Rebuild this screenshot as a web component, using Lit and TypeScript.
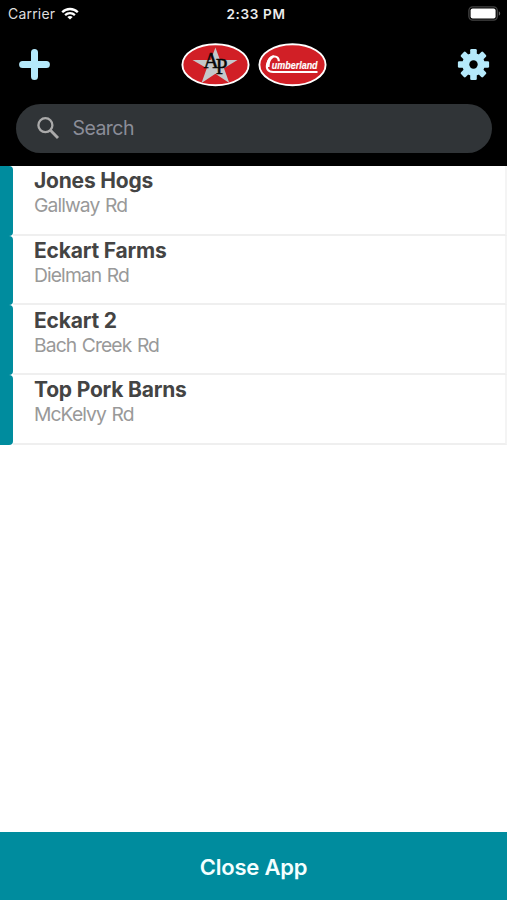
import { LitElement, html, svg, css } from "lit";
import { customElement, property } from "lit/decorators.js";

@customElement("status-bar")
class StatusBar extends LitElement {
  static styles = css`
    :host { display: grid; grid-template-columns: 1fr auto 1fr; align-items: center; height: 28px; color: #ececec; font-size: 14px; padding: 0 6px 0 8px; }
    .carrier { display: flex; align-items: center; gap: 6px; color: #dedede; letter-spacing: 0.2px; margin-top: -1px; }
    .time { font-weight: 600; letter-spacing: 0.65px; font-size: 13.5px; margin: -1px -3px 0 0; }
    .battery { justify-self: end; display: block; margin-top: -2px; }
    svg { display: block; }
  `;
  render() {
    return html`
      <div class="carrier"><span>Carrier</span>
        <svg width="18" height="13" viewBox="0 0 18 13" fill="none" stroke="#fff" stroke-width="2.3">
          <path d="M1.2 5.2C5.5 .9 12.5 .9 16.8 5.2M4.1 8.1c2.8-2.6 7-2.6 9.8 0"/>
          <path d="M9 12.6 6.3 9.9c1.6-1.3 3.8-1.3 5.4 0z" fill="#fff" stroke="none"/>
        </svg>
      </div>
      <div class="time">2:33 PM</div>
      <svg class="battery" width="33" height="15" viewBox="0 0 33 15">
        <rect x=".9" y=".9" width="28.4" height="13.2" rx="3.8" fill="none" stroke="#444" stroke-width="1.3"/>
        <rect x="2.6" y="2.6" width="25" height="9.8" rx="2" fill="#fff"/>
        <path d="M30.8 5.3c1.9.9 1.9 3.5 0 4.4z" fill="#666"/>
      </svg>`;
  }
}

@customElement("brand-logos")
class BrandLogos extends LitElement {
  static styles = css`
    :host { display: flex; gap: 8px; }
    svg { display: block; }
    .serif { font-family: "Liberation Serif", serif; }
    .script { font-family: "Liberation Sans", sans-serif; font-weight: 700; font-style: italic; }
  `;
  render() {
    const oval = svg`<ellipse cx="34.5" cy="21.7" rx="33.1" ry="20.5" fill="#d11f26" stroke="#fff" stroke-width="1.9"/>`;
    return html`
      <svg width="69" height="44" viewBox="0 0 69 44">
        ${oval}
        <path d="M34.4 4.5 39 17H56.5L43 25.3 48.3 40 34.4 30.8 20.5 40 25.8 25.3 11.5 17H29.8z" fill="#c5c8ca"/>
        <text class="serif" transform="translate(22.5 24.8) scale(.92 1)" font-size="23" fill="#080808" stroke="#080808" stroke-width=".5">A<tspan dx="-3.3" dy="6.2">P</tspan></text>
      </svg>
      <svg width="69" height="44" viewBox="0 0 69 44">
        ${oval}
        <path d="M20.8 18.2C21 12 13.4 11.8 10.2 18.4 6.9 25.8 10.2 29 15.2 29H59.5" fill="none" stroke="#fff" stroke-width="2.2"/>
        <path d="M8.6 24C7.9 18 11 12.6 16.2 12.3L14.9 15.2C12 17 11.8 20.6 11.6 24z" fill="#fff"/>
        <text class="script" x="13.8" y="26.3" font-size="10.4" fill="#fff" stroke="#fff" stroke-width=".15" textLength="45.8" lengthAdjust="spacingAndGlyphs">umberland</text>
      </svg>`;
  }
}

@customElement("app-header")
class AppHeader extends LitElement {
  static styles = css`
    :host { display: flex; flex-direction: column; height: 166px; box-sizing: border-box; background: #000; }
    .bar { display: flex; align-items: center; justify-content: space-between; height: 73px; padding: 0 17px 0 18px; }
    .search { display: flex; align-items: center; box-sizing: border-box; height: 49px; margin: 2.5px 15px 0 15.5px; padding-left: 21px; gap: 13px; border-radius: 25px; background: #303437; color: #8b8d98; font-size: 19.5px; letter-spacing: -0.55px; }
    svg { display: block; }
  `;
  render() {
    return html`
      <status-bar></status-bar>
      <div class="bar">
        <svg width="33" height="33" viewBox="0 0 33 33" fill="none" stroke="#b5e9fb" stroke-width="7" stroke-linecap="round"><path d="M16.5 4.6v23.8M4.6 16.5h23.8"/></svg>
        <brand-logos></brand-logos>
        <svg width="33" height="33" viewBox="-16.5 -16.5 33 33">
          <g fill="#b5e9fb">
            ${[0, 45, 90, 135].map((a) => svg`<rect x="-3.3" y="-15.6" width="6.6" height="31.2" rx="1.3" transform="rotate(${a})"/>`)}
            <circle r="11.2"/>
          </g>
          <circle r="4.2" fill="#000"/>
        </svg>
      </div>
      <div class="search">
        <svg width="23" height="23" viewBox="0 0 23 23" fill="none" stroke="#aaa" stroke-width="2.3"><circle cx="8.4" cy="8.2" r="7"/><path d="m13.4 13.2 7.6 7.8" stroke-width="2.9"/></svg>
        <span>Search</span>
      </div>`;
  }
}

@customElement("site-row")
class SiteRow extends LitElement {
  @property() name = "";
  @property() road = "";
  static styles = css`
    :host { display: flex; height: 69.7px; }
    .tab { width: 13.4px; background: #008c9e; border-radius: 0 4px 4px 0; }
    .body { flex: 1; box-sizing: border-box; padding: 2.2px 0 0 20.6px; border-right: 2px solid #f4f4f4; border-bottom: 2px solid #efefef; }
    .name { font-size: 21px; line-height: 26px; font-weight: 650; letter-spacing: -0.2px; color: #444; }
    .road { font-size: 19.3px; line-height: 23.5px; letter-spacing: -0.9px; word-spacing: 1px; color: #999; }
  `;
  render() {
    return html`<div class="tab"></div><div class="body"><div class="name">${this.name}</div><div class="road">${this.road}</div></div>`;
  }
}

@customElement("app-root")
class AppRoot extends LitElement {
  static styles = css`
    :host { display: flex; flex-direction: column; height: 900px; background: #fff; font-family: Inter, "Liberation Sans", sans-serif; overflow: hidden; }
    .list { flex: 1; }
    .close { display: flex; align-items: center; justify-content: center; height: 68px; padding: 2px 0 0; box-sizing: border-box; border: 0; background: #008c9e; color: #f4ffff; font: 600 22px Inter, sans-serif; letter-spacing: -0.2px; }
  `;
  private sites = [
    ["Jones Hogs", "Gallway Rd"],
    ["Eckart Farms", "Dielman Rd"],
    ["Eckart 2", "Bach Creek Rd"],
    ["Top Pork Barns", "McKelvy Rd"],
  ];
  render() {
    return html`
      <app-header></app-header>
      <div class="list">${this.sites.map(([n, r]) => html`<site-row name=${n} road=${r}></site-row>`)}</div>
      <button class="close">Close App</button>`;
  }
}
